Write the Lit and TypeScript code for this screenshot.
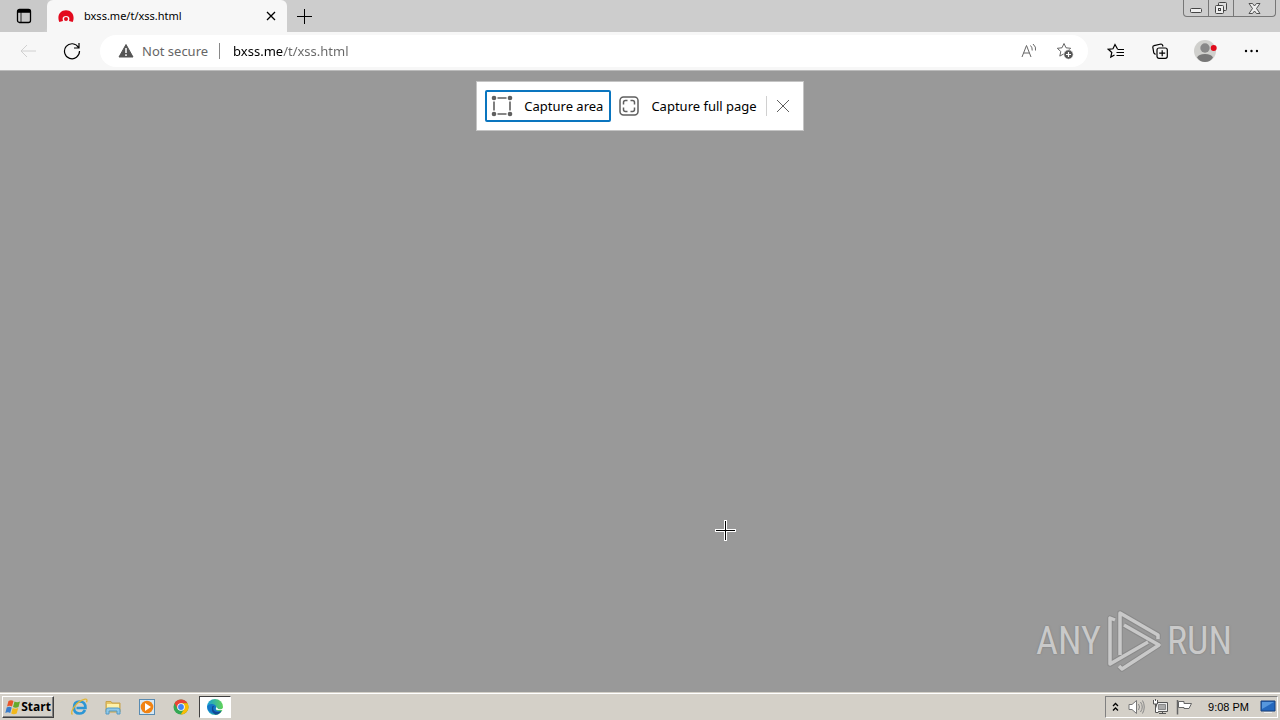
import { LitElement, html, css, svg } from "lit";
import { customElement } from "lit/decorators.js";

const star = "M8 1.5l2 4.3 4.7.5-3.5 3.2 1 4.6L8 11.8l-4.2 2.3 1-4.6L1.3 6.3 6 5.8z";

@customElement("browser-chrome")
class BrowserChrome extends LitElement {
  static styles = css`
    :host { display: block; font: 12px/16px "Noto Sans", "Open Sans", sans-serif; color: #000; }
    button { border: 0; background: none; padding: 0; margin: 0; font: inherit; color: inherit; display: flex; align-items: center; justify-content: center; }
    svg { display: block; fill: none; stroke: currentColor; }
    .solid { stroke: none; }
    .tabs { display: flex; height: 32px; background: #cdcdcd; }
    .workspaces { width: 47px; background: #c9c9c9; border-radius: 0 0 6px 0; }
    .tab { width: 240px; box-sizing: border-box; background: #f7f7f7; border-radius: 6px 6px 0 0; display: flex; align-items: center; padding: 0 8px 0 10px; }
    .title { flex: 1; margin-left: 9px; font-size: 11px; }
    .close { width: 16px; height: 16px; }
    .add { width: 34px; }
    .windowbar { margin-left: auto; margin-right: 4px; height: 17px; box-sizing: border-box; display: flex; border: 1px solid #777; border-top: 0; border-radius: 0 0 4px 4px; color: #444; }
    .windowbar button { width: 25px; border-right: 1px solid #777; }
    .windowbar button:last-child { width: 41px; border: 0; }
    .tools { display: flex; align-items: center; background: #f7f7f7; padding: 0 6px; border-bottom: 1px solid #bbb; box-sizing: border-box; height: 39px; }
    .tools > button { width: 44px; height: 32px; }
    .tools > .wide { width: 46px; }
    .tools > .back { color: #d0d0d0; }
    .address { flex: 1; height: 32px; border-radius: 16px; background: #fff; margin: 0 6px; display: flex; align-items: center; padding: 0 5px 0 18px; font-size: 13px; color: #666; }
    .address button { width: 36px; height: 32px; }
    .secure { margin-left: 8px; }
    .rule { width: 1px; height: 16px; background: #888; margin: 0 13px 0 11px; }
    .url { flex: 1; min-width: 0; border: 0; padding: 0; outline: 0; font: inherit; color: #000; background: linear-gradient(to right, #000 50px, #666 50px); background-clip: text; -webkit-background-clip: text; -webkit-text-fill-color: transparent; }
  `;
  render() {
    return html`
      <div class="tabs">
        <button class="workspaces" aria-label="Tab actions"><svg width="16" height="16" viewBox="0 0 16 16" stroke-width="1.3"><rect x="1.5" y="1.5" width="13" height="13" rx="2"/><path d="M5 4v10" stroke-width=".8"/><path d="M2 2.5h12v1.6H2z" fill="currentColor"/></svg></button>
        <div class="tab">
          <svg class="solid" width="18" height="16" viewBox="0 0 18 16"><path d="M2.300 14C-.3 8 3 2.300 9 2.300s9.300 5.700 6.700 11.700L12 13q1.500-5-3-5t-3 5z" fill="#e30a1e"/><circle cx="9" cy="11" r="2" fill="#e30a1e"/></svg>
          <span class="title">bxss.me/t/xss.html</span>
          <button class="close" aria-label="Close tab"><svg width="10" height="10" viewBox="0 0 10 10" stroke-width="1.300"><path d="M1 1l8 8M9 1L1 9"/></svg></button>
        </div>
        <button class="add" aria-label="New tab"><svg width="15" height="15" viewBox="0 0 15 15"><path d="M7.500 0v15M0 7.500h15"/></svg></button>
        <div class="windowbar">
          <button aria-label="Minimize"><svg width="13" height="11" viewBox="0 0 13 11"><rect x=".5" y="5.500" width="11" height="4" rx="1" fill="#eee"/></svg></button>
          <button aria-label="Restore"><svg width="13" height="13" viewBox="0 0 13 13"><rect x="3.500" y=".5" width="8" height="8" rx="1" fill="#ddd"/><rect x=".5" y="3.500" width="8" height="8" rx="1" fill="#eee"/><rect x="3.500" y="6.500" width="2" height="2"/></svg></button>
          <button aria-label="Close window"><svg width="13" height="11" viewBox="0 0 13 11"><path d="M1 .5h3.500l2 2.500 2-2.500H12L8.500 5.500l3.500 5H8.500l-2-2.500-2 2.500H1l3.500-5z" fill="#eee" stroke-width=".9"/></svg></button>
        </div>
      </div>
      <div class="tools">
        <button class="back" aria-label="Back"><svg width="16" height="14" viewBox="0 0 16 14"><path d="M7 1L1 7l6 6M1 7h15"/></svg></button>
        <button aria-label="Refresh"><svg width="18" height="18" viewBox="0 0 18 18" stroke-width="1.200"><path d="M15.500 5.500A7.500 7.500 0 1 0 16.500 9M16 1v5h-5"/></svg></button>
        <div class="address">
          <svg width="16" height="16" viewBox="0 0 16 16"><path d="M8 1.500l7 12.500H1z" fill="#555" stroke="#555" stroke-linejoin="round"/><path d="M8 5v5M8 11.300v1.700" stroke="#fff" stroke-width="1.500"/></svg>
          <label class="secure" for="url">Not secure</label>
          <span class="rule"></span>
          <input class="url" id="url" type="text" .value=${"bxss.me/t/xss.html"} spellcheck="false" />
          <button aria-label="Read aloud"><svg width="16" height="16" viewBox="0 0 16 16"><path d="M1 14L5.500 2.500 10 14M2.700 10h5.700M9.500 2.500q2 2 1.700 5M12 1q3.500 3 2.500 6.500"/></svg></button>
          <button aria-label="Add to favorites"><svg width="18" height="18" viewBox="0 0 18 18"><path d=${star}/><circle cx="12.500" cy="12.500" r="4.700" fill="#555" stroke="#fff" stroke-width=".7"/><path d="M12.500 10v5M10 12.500h5" stroke="#fff" stroke-width="1.200"/></svg></button>
        </div>
        <button aria-label="Favorites"><svg width="18" height="16" viewBox="0 0 18 16" stroke-width="1.200"><path d="M10.500 6L8 1.500 6 5.800l-4.700.5 3.500 3.200-1 4.600L7.500 12M10.500 6.500H17M9.500 9.500H17M9.500 12.500H17"/></svg></button>
        <button aria-label="Collections"><svg width="16" height="16" viewBox="0 0 16 16" stroke-width="1.200"><path d="M3.500 11.500L1.800 10 .8 4.200Q.8 2.800 2 2.600L9 1q1.200 0 1.600 1.200L11 3.500"/><rect x="5" y="5" width="10.300" height="10.300" rx="2"/><path d="M10.200 7.200v6M7.200 10.200h6"/></svg></button>
        <button class="wide" aria-label="Profile"><svg class="solid" width="24" height="22" viewBox="0 0 24 22"><circle cx="12" cy="11" r="11" fill="#d0d0cd"/><circle cx="12" cy="8" r="4.700" fill="#888"/><path d="M4 17.500q1.500-3.500 8-3.500t8 3.500q-3 4.500-8 4.500t-8-4.500z" fill="#777"/><circle cx="20.700" cy="8" r="3" fill="#e00b1c"/></svg></button>
        <button class="wide" aria-label="Settings and more"><svg class="solid" width="14" height="4" viewBox="0 0 14 4"><circle cx="2" cy="2" r="1.200" fill="#000"/><circle cx="7.500" cy="2" r="1.200" fill="#000"/><circle cx="13" cy="2" r="1.200" fill="#000"/></svg></button>
      </div>`;
  }
}

@customElement("capture-bar")
class CaptureBar extends LitElement {
  static styles = css`
    :host { display: flex; align-items: center; box-sizing: border-box; height: 50px; padding: 0 6px 0 8px; background: #fff; border: 1px solid #c4c4c4; font: 13px/18px "Noto Sans", "Open Sans", sans-serif; }
    button { height: 32px; border: 2px solid transparent; border-radius: 2px; background: none; padding: 0 6px 0 4px; margin: 0; font: inherit; color: #000; display: flex; align-items: center; gap: 11px; }
    .active { border-color: #0a75bf; margin-right: 1px; }
    .rule { width: 1px; height: 20px; background: #d0d0d0; margin: 0 2px 0 1px; }
    svg { display: block; fill: none; stroke: #5f5f5f; }
    .close { padding: 0 5px; }
  `;
  render() {
    return html`
      <button class="active"><svg width="22" height="22" viewBox="0 0 22 22" stroke-width="1.600"><path d="M6.500 3h9M6.500 19h9M3 6.500v9M19 6.500v9"/><g fill="#5f5f5f" stroke="none"><circle cx="3" cy="3" r="2.300"/><circle cx="19" cy="3" r="2.300"/><circle cx="3" cy="19" r="2.300"/><circle cx="19" cy="19" r="2.300"/></g></svg>Capture area</button>
      <button><svg width="22" height="22" viewBox="0 0 22 22" stroke-width="1.500"><rect x="2" y="2" width="18" height="18" rx="3.500"/><path d="M9.500 5.500H7.500q-2 0-2 2v2M12.500 5.500h2q2 0 2 2v2M9.500 16.500h-2q-2 0-2-2v-2M12.500 16.500h2q2 0 2-2v-2"/></svg>Capture full page</button>
      <span class="rule"></span>
      <button class="close" aria-label="Close"><svg width="14" height="14" viewBox="0 0 14 14"><path d="M1 1l12 12M13 1L1 13"/></svg></button>`;
  }
}

@customElement("task-bar")
class TaskBar extends LitElement {
  static styles = css`
    :host { display: flex; align-items: center; height: 28px; box-sizing: border-box; background: #d4d0c8; border-top: 1px solid #d4d0c8; box-shadow: inset 0 1px #fff; padding: 0 2px; font: 11px/16px "Liberation Sans", Arial, sans-serif; }
    button { border: 0; padding: 0; margin: 0; background: none; font: inherit; color: #000; display: flex; align-items: center; justify-content: center; }
    svg { display: block; fill: none; }
    .start { width: 52px; height: 22px; font: bold 12px/16px "Open Sans", "Noto Sans", sans-serif; border: 1px solid; border-color: #fff #404040 #404040 #fff; box-shadow: inset -1px -1px #808080; margin-right: 8px; }
    .app { width: 34px; height: 22px; }
    .current { width: 32px; background: #fff; border: 1px solid; border-color: #404040 #fff #fff #404040; margin-left: 1px; }
    .tray { margin-left: auto; height: 22px; box-sizing: border-box; border: 1px solid; border-color: #808080 #fff #fff #808080; display: flex; align-items: center; padding-left: 4px; }
    .tray button { width: 24px; height: 20px; }
    .tray .chevron { width: 10px; margin-right: 4px; }
    .clock { margin: 0 10px 0 12px; }
    .tray .desktop { width: 18px; }
  `;
  render() {
    return html`
      <button class="start"><svg width="16" height="16" viewBox="0 0 16 16"><path d="M3.500 2Q6 .5 8.500 2L7 7.500Q4.500 6.200 2 7.500z" fill="#e8552a"/><path d="M9.500 2.500Q12 4 15 2.500L13.500 8q-3 1.300-5.500 0z" fill="#65a92d"/><path d="M1.700 8.500q2.500-1.300 5 0L5.200 14Q3 12.700.3 14z" fill="#397dcc"/><path d="M7.700 9q2.500 1.300 5.500 0l-1.500 5.500q-3 1.300-5.500 0z" fill="#f2b81b"/></svg>Start</button>
      <button class="app" aria-label="Internet Explorer"><svg width="18" height="18" viewBox="0 0 18 18"><path d="M15 12q-1.500 3.500-5.500 3.500-5.500 0-5.500-6T9.500 3.500q6 0 6 6.500H6.500" stroke="#2c96d5" stroke-width="2.600"/><path d="M2.500 16.500C-1 14 7 3 15 1.200q3-.4 1.500 3" stroke="#e1b637" stroke-width="1.300"/></svg></button>
      <button class="app" aria-label="Windows Explorer"><svg width="18" height="18" viewBox="0 0 18 18"><path d="M2 3.500h5l1 1.500h8v9H2z" fill="#e7c565" stroke="#c8a249"/><path d="M3 6h12v5H3z" fill="#fff1a8"/><path d="M2 16v-4q0-2 2-2h10q2 0 2 2v4h-3v-3H5v3z" fill="#8fc8e8" stroke="#5299c5"/></svg></button>
      <button class="app" aria-label="Media Player"><svg width="18" height="18" viewBox="0 0 18 18"><rect x="1.500" y="1.500" width="15" height="15" fill="#d6e8f5" stroke="#598bb1"/><circle cx="9" cy="9" r="6.300" fill="#f18313"/><path d="M7 5l6 4-6 4z" fill="#fff"/></svg></button>
      <button class="app" aria-label="Chrome"><svg width="16" height="16" viewBox="0 0 16 16"><circle cx="8" cy="8" r="7.500" fill="#34a853"/><path d="M1.500 4.200A7.500 7.500 0 0 1 14.500 4.200H8L4.700 10z" fill="#ea4335"/><path d="M14.500 4.200A7.500 7.500 0 0 1 7.700 15.500L11.300 9.800 8 4.200z" fill="#fbbc04"/><circle cx="8" cy="8" r="3.800" fill="#fff"/><circle cx="8" cy="8" r="2.900" fill="#4285f4"/></svg></button>
      <button class="app current" aria-label="Edge"><svg width="16" height="16" viewBox="0 0 16 16"><defs><linearGradient id="e" x2="1"><stop stop-color="#169fd9"/><stop offset="1" stop-color="#62d356"/></linearGradient></defs><circle cx="8" cy="8" r="8" fill="url(#e)"/><path d="M.2 7Q2 4.500 5.500 5C8 5.300 9.500 7 9 8.500 8 12 11 13 14.500 11.800A8 8 0 0 1 .2 7z" fill="#1476c8"/><path d="M5.500 7Q3 12 8.500 15.700q3.800-.2 6-3.700-6 2.500-8-1Q5.500 9 7 7z" fill="#114a93"/><path d="M9 7.500q1 1-.3 2.500.3 1 2.600 1H16V9q-1 1.500-3 1.300-2.500-.1-4-2.800z" fill="#fff"/></svg></button>
      <div class="tray">
        <button class="chevron" aria-label="Show hidden icons"><svg width="7" height="10" viewBox="0 0 7 10" stroke="#000" stroke-width="1.300"><path d="M1 4l2.500-2.500L6 4M1 8.500L3.500 6 6 8.500"/></svg></button>
        <button aria-label="Volume"><svg width="17" height="16" viewBox="0 0 17 16" stroke="#777"><path d="M1 5.500h3L8.500 1.500v13L4 10.500H1z" fill="#fff"/><path d="M10.500 5q2 3 0 6M12.500 3q3.500 5 0 10M14.500 1.500q3.500 6.500 0 13" stroke="#888"/></svg></button>
        <button aria-label="Network"><svg width="16" height="16" viewBox="0 0 16 16" stroke="#555"><path d="M4.500 3.500h11v9h-11zM7 14.500h7M10.500 12.500v2" fill="#eee"/><path d="M6.500 5.500h7v5h-7z" fill="#aaa" stroke="#888"/><path d="M1.500 1v4h4V1M3.500 0v2M3.500 5v8.500h3" fill="#fff"/></svg></button>
        <button aria-label="Action center"><svg width="16" height="16" viewBox="0 0 16 16" stroke="#666"><path d="M2.500 2.500H8v2h7.500L13 9.500H8v-1H2.500z" fill="#fff"/><path d="M1.500 1v14.500" stroke-width="1.500"/></svg></button>
        <span class="clock">9:08 PM</span>
        <button class="desktop" aria-label="Show desktop"><svg width="16" height="14" viewBox="0 0 16 14"><path d="M1 1h14v10H1z" fill="#2468bd" stroke="#173f7b"/><path d="M2 2h12L2 9z" fill="#5697dd"/><path d="M4 12.500h8" stroke="#eee"/></svg></button>
      </div>`;
  }
}

@customElement("app-root")
class AppRoot extends LitElement {
  static styles = css`
    :host { display: flex; flex-direction: column; min-height: 100vh; background: #999; }
    main { flex: 1; position: relative; display: flex; align-items: flex-start; justify-content: center; padding-top: 10px; }
    .cursor { position: absolute; left: 715px; top: 449px; }
    .mark { position: absolute; right: 48px; bottom: 20px; display: flex; align-items: center; gap: 6px; color: #c9c9c9; font: 38px/62px "Roboto Condensed", "Liberation Sans Narrow", "Open Sans Condensed", sans-serif; text-shadow: 0 0 2px #777; }
    .mark svg { display: block; }
  `;
  render() {
    return html`
      <browser-chrome></browser-chrome>
      <main>
        <capture-bar></capture-bar>
        <svg class="cursor" width="21" height="21" viewBox="0 0 21 21"><path d="M10.500 0v21M0 10.500h21" stroke="#fff" stroke-width="3"/><path d="M10.500 1v19M1 10.500h19" stroke="#000"/></svg>
        <div class="mark"><span>ANY</span>
          <svg width="54" height="62" viewBox="0 0 54 62" fill="none" stroke-linejoin="round">${["#8a8a8a", "#c9c9c9"].map((c, i) => svg`<path stroke=${c} stroke-width=${i ? 3.5 : 5.5} d="M8 10L3 8V54L41 32M13 45V3L51 25V29M17 15L52 35L15 59L12 56"/>`)}</svg>
          <span>RUN</span></div>
      </main>
      <task-bar></task-bar>`;
  }
}
